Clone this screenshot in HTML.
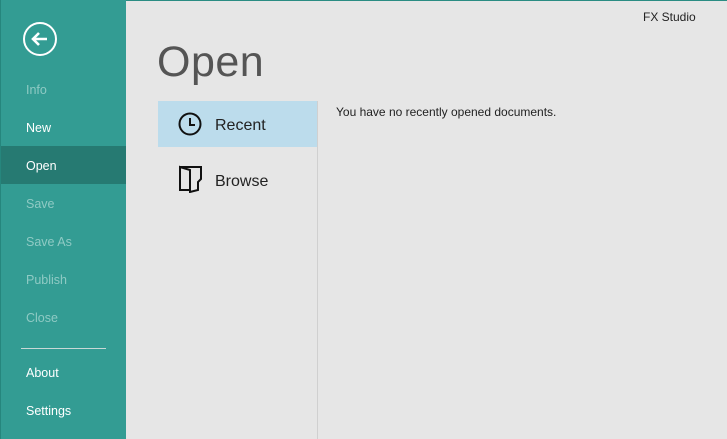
<!DOCTYPE html>
<html><head><style>
*{margin:0;padding:0;box-sizing:border-box}
body{width:727px;height:439px;overflow:hidden;background:#e6e6e6;font-family:"Liberation Sans",sans-serif;position:relative}
.top{position:absolute;left:0;top:0;width:727px;height:1px;background:#2a8c83}
.side{position:absolute;left:0;top:0;width:126px;height:439px;background:#339c93;border-left:1px solid #26867d}
.side .it{position:absolute;left:25px;font-size:12.5px;color:#fff}
.side .dis{color:#8fcac4}
.sel{position:absolute;left:0;top:146px;width:125px;height:38px;background:#267a72}
.hr{position:absolute;left:20px;top:348px;width:85px;height:1px;background:#c8d8d6}
.title{position:absolute;left:157px;top:38px;font-size:43px;color:#555;letter-spacing:0.5px}
.rec{position:absolute;left:158px;top:101px;width:159px;height:46px;background:#bcdcec}
.vl{position:absolute;left:317px;top:101px;width:1px;height:338px;background:#d0d0d0}
.lbl{position:absolute;left:215px;font-size:16px;color:#222}
.msg{position:absolute;left:336px;top:105px;font-size:12px;color:#222}
.fx{position:absolute;left:643px;top:10px;font-size:12px;color:#222}
</style></head><body>
<div class="top"></div>
<div class="side">
<svg style="position:absolute;left:21px;top:21px" width="36" height="36" viewBox="0 0 36 36"><circle cx="18" cy="18" r="16" fill="none" stroke="#fff" stroke-width="2"/><path d="M11 18H25M17 12L11 18L17 24" fill="none" stroke="#fff" stroke-width="2.6"/></svg>
<div class="it dis" style="top:83px">Info</div>
<div class="it" style="top:121px">New</div>
<div class="sel"></div>
<div class="it" style="top:159px">Open</div>
<div class="it dis" style="top:197px">Save</div>
<div class="it dis" style="top:235px">Save As</div>
<div class="it dis" style="top:273px">Publish</div>
<div class="it dis" style="top:311px">Close</div>
<div class="hr"></div>
<div class="it" style="top:366px">About</div>
<div class="it" style="top:404px">Settings</div>
</div>
<div class="title">Open</div>
<div class="rec"></div>
<div class="vl"></div>
<svg style="position:absolute;left:178px;top:112px" width="24" height="24" viewBox="0 0 24 24"><circle cx="12" cy="12" r="10.5" fill="none" stroke="#111" stroke-width="2"/><path d="M12 6V13H17" fill="none" stroke="#111" stroke-width="2"/></svg>
<div class="lbl" style="top:117px">Recent</div>
<svg style="position:absolute;left:179px;top:165px" width="24" height="28" viewBox="0 0 24 28"><path d="M1 2H22V14L19 17V25L11 27V5L1 2V25H11" fill="none" stroke="#111" stroke-width="2"/></svg>
<div class="lbl" style="top:173px">Browse</div>
<div class="msg">You have no recently opened documents.</div>
<div class="fx">FX Studio</div>
</body></html>
